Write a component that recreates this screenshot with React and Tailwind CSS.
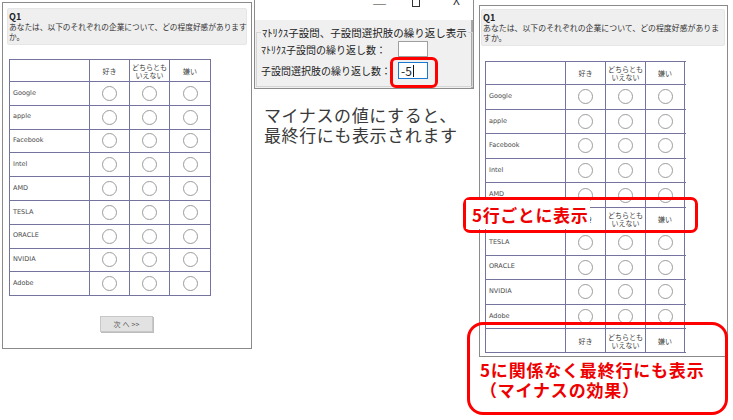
const companies = ['Google', 'apple', 'Facebook', 'Intel', 'AMD', 'TESLA', 'ORACLE', 'NVIDIA', 'Adobe'];

function Radio() {
  return <div className="h-[15px] w-[15px] rounded-full border border-[#9c9c9c] bg-white" />;
}

function HeaderRow({ cols, h }) {
  return (
    <div className={`grid ${cols} ${h} border-b border-[#74749e] text-[7px] leading-[8px] text-[#444]`}>
      <div className="border-r border-[#74749e]" />
      <div className="flex items-center justify-center border-r border-[#74749e]">好き</div>
      <div className="flex items-center justify-center border-r border-[#74749e] text-center">
        どちらとも
        <br />
        いえない
      </div>
      <div className="flex items-center justify-center border-r border-[#74749e]">嫌い</div>
    </div>
  );
}

function ItemRow({ cols, h, name }) {
  return (
    <div className={`grid ${cols} ${h} border-b border-[#74749e]`}>
      <div className="flex items-center border-r border-[#74749e] pl-[3px] font-['DejaVu_Sans',sans-serif] text-[6.5px] text-[#4a4a4a]">
        {name}
      </div>
      <div className="flex items-center justify-center border-r border-[#74749e]">
        <Radio />
      </div>
      <div className="flex items-center justify-center border-r border-[#74749e]">
        <Radio />
      </div>
      <div className="flex items-center justify-center border-r border-[#74749e]">
        <Radio />
      </div>
    </div>
  );
}

function LeftPanel() {
  const cols = 'grid-cols-[80px_40px_40px_41px]';
  return (
    <div className="ml-[2px] mt-[2px] flex h-[347px] w-[250px] shrink-0 flex-col border border-[#8a8a8a]">
      <div className="ml-[4px] mt-[5px] h-[37px] w-[240px] rounded-[2px] border border-[#e6e6e6] bg-[#efefef] px-[1px] pt-[2px]">
        <div className="text-[9px] font-bold leading-[11px] text-[#222]">Q1</div>
        <div className="whitespace-nowrap text-[7.7px] leading-[10px] text-[#333]">
          あなたは、以下のそれぞれの企業について、どの程度好感があります
          <br />
          か。
        </div>
      </div>
      <div className="ml-[6px] mt-[14px] w-[202px] border-l border-t border-[#74749e]">
        <HeaderRow cols={cols} h="h-[22px]" />
        {companies.map((c) => (
          <ItemRow key={c} cols={cols} h="h-[23.8px]" name={c} />
        ))}
      </div>
      <div className="ml-[97px] mt-[20px] flex h-[16px] w-[53px] items-center justify-center gap-[2px] border border-[#c8c8c8] bg-[#e2e2e2] text-[7px] text-[#555] shadow-[1px_1px_0_#bdbdbd]">
        <span>次</span>
        <span>へ</span>
        <span>&gt;&gt;</span>
      </div>
    </div>
  );
}

function RightPanel() {
  const cols = 'grid-cols-[80px_40px_40px_39px]';
  const first = companies.slice(0, 5);
  const rest = companies.slice(5);
  return (
    <div className="ml-[5px] mt-[5px] flex h-[352px] w-[249px] shrink-0 flex-col border border-[#8a8a8a]">
      <div className="ml-[1px] mt-[3px] h-[37px] w-[244px] rounded-[2px] border border-[#e6e6e6] bg-[#efefef] px-[1px] pt-[2px]">
        <div className="text-[9px] font-bold leading-[11px] text-[#222]">Q1</div>
        <div className="whitespace-nowrap text-[7.9px] leading-[10px] text-[#333]">
          あなたは、以下のそれぞれの企業について、どの程度好感がありま
          <br />
          すか。
        </div>
      </div>
      <div className="ml-[5px] mt-[15px] w-[201px] border-l border-t border-[#74749e]">
        <HeaderRow cols={cols} h="h-[23px]" />
        {first.map((c) => (
          <ItemRow key={c} cols={cols} h="h-[24.6px]" name={c} />
        ))}
        <HeaderRow cols={cols} h="h-[23px]" />
        {rest.map((c) => (
          <ItemRow key={c} cols={cols} h="h-[24.6px]" name={c} />
        ))}
        <HeaderRow cols={cols} h="h-[24px]" />
      </div>
    </div>
  );
}

function Dialog() {
  return (
    <div className="relative ml-[2px] w-[220px] shrink-0">
      <div className="h-[89px] border-x border-b border-[#8c8c8c]">
        <div className="flex h-[20px] items-start overflow-hidden bg-white text-[#333]">
          <span className="ml-[118px] mt-[-4px] text-[13px] leading-[16px]">─</span>
          <span className="ml-[26px] mt-[-9px] h-[16px] w-[8px] border border-[#333]" />
          <span className="ml-[33px] mt-[-7px] text-[12px] leading-[14px]">X</span>
        </div>
        <div className="flex h-[68px] border-r-2 border-[#a8a8a8] bg-[#f0f0f0] pl-[1px] pr-[2px] pt-[6px]">
          <fieldset className="h-[61px] w-[213px] border border-[#d6d6d6] px-[4px] text-[#222]">
            <legend className="whitespace-nowrap px-[1px] text-[10.5px] leading-[13px]">
              ﾏﾄﾘｸｽ子設問、子設問選択肢の繰り返し表示
            </legend>
            <div className="mt-[2px] flex h-[16px] items-center">
              <span className="w-[137px] shrink-0 whitespace-nowrap text-[10px] leading-[13px]">ﾏﾄﾘｸｽ子設問の繰り返し数：</span>
              <div className="h-[16px] w-[30px] shrink-0 border border-[#a0a0a0] bg-white" />
            </div>
            <div className="mt-[5px] flex h-[17px] items-center">
              <span className="w-[137px] shrink-0 whitespace-nowrap text-[10px] leading-[13px]">子設問選択肢の繰り返し数：</span>
              <div className="flex h-[17px] w-[30px] shrink-0 items-center border border-[#1b78d0] bg-white pl-[2px] text-[12px] leading-[14px]">
                -5<span className="ml-[1px] h-[12px] w-px bg-[#111]" />
              </div>
            </div>
          </fieldset>
        </div>
      </div>
      <div className="ml-[10px] mt-[16px] whitespace-nowrap text-[17px] leading-[20px] tracking-[0.6px] text-[#3a3a3a]">
        マイナスの値にすると、
        <br />
        最終行にも表示されます
      </div>
      <div className="absolute left-[136px] top-[57px] h-[31px] w-[48px] rounded-[6px] border-[3px] border-[#ff0000]" />
    </div>
  );
}

export default function App() {
  return (
    <div className="relative flex h-[420px] w-[733px] items-start overflow-hidden bg-white font-['Noto_Sans_CJK_JP',sans-serif]">
      <LeftPanel />
      <Dialog />
      <RightPanel />

      <div className="absolute left-[463px] top-[197px] h-[36px] w-[235px] rounded-[7px] border-[3px] border-[#ff0000]" />
      <div className="absolute left-[466px] top-[200px] flex h-[29px] items-center bg-white pl-[6px] pr-[2px] text-[17px] font-bold leading-[20px] tracking-[0.6px] text-[#ee0000]">
        5行ごとに表示
      </div>

      <div className="absolute left-[467px] top-[322px] flex h-[93px] w-[261px] flex-col rounded-[16px] border-[3px] border-[#ff0000] pl-[10px] pt-[35px] text-[17px] font-bold leading-[20px] tracking-[0.8px] text-[#ee0000]">
        <div className="whitespace-nowrap">5に関係なく最終行にも表示</div>
        <div className="whitespace-nowrap">（マイナスの効果）</div>
      </div>
    </div>
  );
}
